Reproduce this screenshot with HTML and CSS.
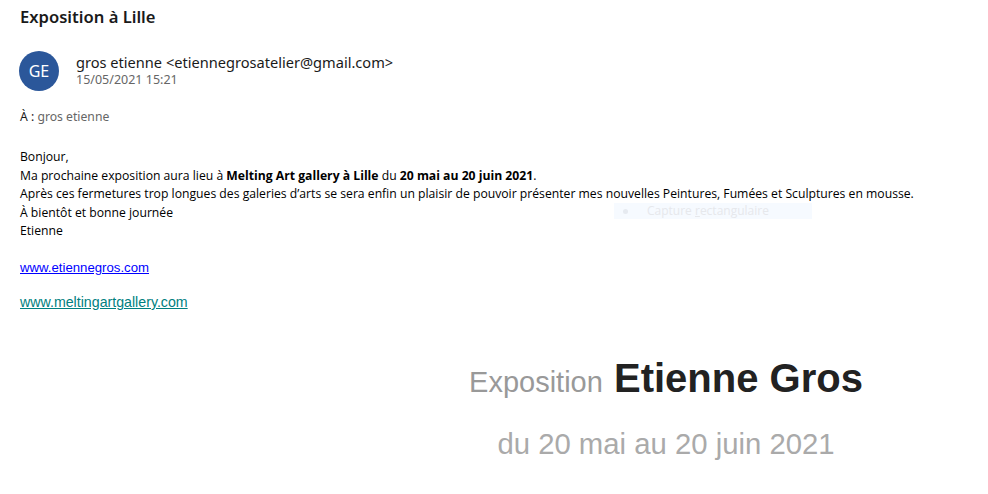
FILE: index.html
```html
<!DOCTYPE html>
<html lang="fr">
<head>
    <meta charset="UTF-8">
    <title>Exposition à Lille</title>
    <link rel="stylesheet" href="styles.css">
</head>
<body>
    <div class="mail">
        <h1 class="subject">Exposition à Lille</h1>

        <div class="sender">
            <div class="avatar">GE</div>
            <div class="sender-info">
                <div class="sender-name">gros etienne &lt;etiennegrosatelier@gmail.com&gt;</div>
                <div class="sender-date">15/05/2021 15:21</div>
            </div>
        </div>

        <div class="recipients">À : <span class="recipient">gros etienne</span></div>

        <div class="body">
            <p class="text">
                Bonjour,<br>
                Ma prochaine exposition aura lieu à <b>Melting Art gallery à Lille</b> du <b>20 mai au 20 juin 2021</b>.<br>
                Après ces fermetures trop longues des galeries d’arts se sera enfin un plaisir de pouvoir présenter mes nouvelles Peintures, Fumées et Sculptures en mousse.<br>
                À bientôt et bonne journée<br>
                Etienne
            </p>

            <p class="link-row"><a href="#" class="link">www.etiennegros.com</a></p>
            <p class="link-row"><a href="#" class="link gallery">www.meltingartgallery.com</a></p>

            <div class="expo">
                <div class="expo-title"><span class="expo-label">Exposition</span> <b>Etienne Gros</b></div>
                <div class="expo-dates">du 20 mai au 20 juin 2021</div>
            </div>
        </div>

        <!-- leftover of a screen capture menu -->
        <div class="ghost"><span class="ghost-dot"></span><span>Capture <u>r</u>ectangulaire</span></div>
    </div>
</body>
</html>
```

FILE: styles.css
```css
body {
    margin: 0;
    background: #ffffff;
    color: #000000;
    font-family: 'Noto Sans', 'Open Sans', sans-serif;
}

.mail {
    position: relative;
    padding: 6px 20px 0 20px;
}

.subject {
    margin: 0;
    font-size: 16.6px;
    font-weight: 600;
    line-height: 22px;
    color: #1a1a1a;
}

.sender {
    display: flex;
    align-items: center;
    margin-top: 23px;
}

.avatar {
    width: 40px;
    height: 40px;
    border-radius: 50%;
    background-color: #2b579a;
    color: white;
    display: flex;
    align-items: center;
    justify-content: center;
    font-size: 16px;
    margin-left: -1px;
}

.sender-info {
    margin-left: 17px;
    margin-top: -2px;
}

.sender-name {
    font-size: 14.6px;
    line-height: 20px;
    color: #1a1a1a;
}

.sender-date {
    font-size: 12.5px;
    line-height: 16px;
    color: #666666;
}

.recipients {
    margin-top: 17px;
    font-size: 12.2px;
    color: #1a1a1a;
}

.recipient {
    color: #666666;
}

.body {
    margin-top: 23px;
}

.text {
    margin: 0;
    font-family: 'Open Sans', sans-serif;
    font-size: 12.2px;
    line-height: 18.6px;
}

.link-row {
    margin: 19px 0 0 0;
    font-family: 'Liberation Sans', Arial, sans-serif;
    font-size: 13.2px;
}

.link {
    color: #0000ff;
}

.gallery {
    color: #008080;
    font-size: 14.2px;
}

.expo {
    margin: 46px 0 0 446px;
    width: 400px;
    text-align: center;
    font-family: 'Liberation Sans', Arial, sans-serif;
}

.expo-title {
    font-size: 40px;
    color: #222222;
}

.expo-label {
    font-size: 29px;
    color: #999999;
}

.expo-dates {
    margin-top: 26px;
    font-size: 29.3px;
    color: #aaaaaa;
}

.ghost {
    position: absolute;
    left: 614px;
    top: 203px;
    width: 198px;
    height: 16px;
    background: #f6faff;
    color: #e6e8ec;
    font-family: 'Open Sans', sans-serif;
    font-size: 12px;
    line-height: 16px;
    display: flex;
    align-items: center;
}

.ghost-dot {
    width: 5px;
    height: 5px;
    border-radius: 50%;
    background: #e6eaf0;
    margin: 0 19px 0 9px;
}
```
